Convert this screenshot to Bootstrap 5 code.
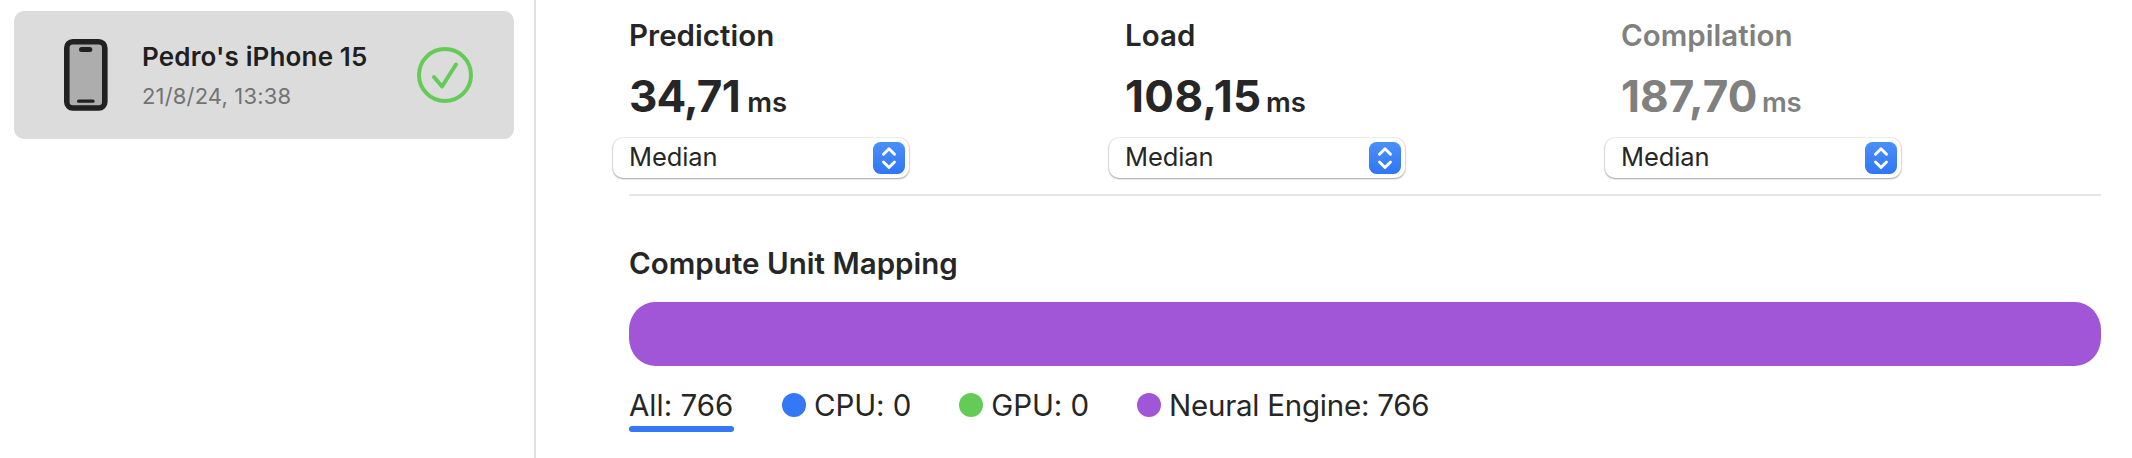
<!DOCTYPE html>
<html lang="en">
<head>
<meta charset="utf-8">
<title>Performance Report</title>
<link rel="stylesheet" href="https://cdn.jsdelivr.net/npm/bootstrap@5.3.0/dist/css/bootstrap.min.css">
<style>
body{font-family:Inter,"Liberation Sans",sans-serif;color:#262626;background:#fff;height:458px;overflow:hidden;white-space:nowrap}
.sidebar{width:536px;border-right:2px solid #e2e2e2;padding:11px 20px 0 14px}
.device{height:128px;border-radius:10px;background:#dcdcdc;padding:0 41px 0 50px}
.device-info{margin-left:34px}
.device-name{font-size:26px;line-height:32px;font-weight:600;letter-spacing:.15px;color:#1f1f1f}
.device-date{font-size:22px;line-height:28px;color:#737373;margin-top:9px;letter-spacing:.16px}
.report{padding:17px 31px 0 93px}
.metrics{display:grid;grid-template-columns:496px 496px 1fr}
.title{font-size:29.5px;line-height:36px;font-weight:600;letter-spacing:.03px}
.value{font-size:44px;line-height:48px;height:48px;font-weight:700;margin-top:19px}
.unit{font-size:27.5px;line-height:1;font-weight:600;letter-spacing:-.2px;margin-left:4.500px}
.prediction{letter-spacing:-.8px;margin-right:3px}
.load{letter-spacing:.4px}
.compilation{letter-spacing:.1px}
.dim{color:#808080}
.picker{width:296px;height:40px;margin:18px 0 0 -16px;border-radius:10px;padding:0 4px 0 16px;background:#fff;box-shadow:0 0 0 1px rgba(0,0,0,.07),0 1px 2px rgba(0,0,0,.32)}
.picker-label{font-size:25.5px;line-height:37px;height:40px;letter-spacing:-.08px}
.divider{height:2px;background:#e5e5e5;margin:16px 0 49px}
.bar{height:64px;border-radius:26px / 28px;background:#a056d6;margin-top:21px}
.legend{font-size:29.5px;line-height:36px;margin-top:21px;letter-spacing:-.08px;gap:48px}
.selected::after{content:"";display:block;height:6px;border-radius:3px;background:#3478f6;margin-top:3px;width:105px}
.selected{width:105px;letter-spacing:0}
.neural{letter-spacing:-.24px}
.dot{width:24px;height:24px;border-radius:50%;margin-top:6px;margin-right:8px}
.dot-cpu{background:#3478f6}
.dot-gpu{background:#64cb56}
.dot-neural{background:#a056d6}
</style>
</head>
<body class="d-flex">
<aside class="sidebar flex-shrink-0">
  <div class="device d-flex align-items-center">
    <svg width="44" height="72" viewBox="0 0 44 72"><rect x="2.8" y="2.8" width="38" height="66.2" rx="6" fill="#adadad" stroke="#212121" stroke-width="5.6"/><rect x="15" y="8" width="13.3" height="5" rx="2.5" fill="#212121"/><rect x="13" y="60.6" width="17.6" height="3.2" rx="1.6" fill="#212121"/></svg>
    <div class="device-info">
      <div class="device-name">Pedro's iPhone 15</div>
      <div class="device-date">21/8/24, 13:38</div>
    </div>
    <svg class="ms-auto" width="56" height="56" viewBox="0 0 56 56" fill="none" stroke="#64cb56" stroke-width="4"><circle cx="28" cy="28" r="26"/><path d="M17 30L25 39.500L39 17.500" stroke-linecap="round" stroke-linejoin="round"/></svg>
  </div>
</aside>
<main class="report flex-grow-1">
  <section class="metrics">
    <div>
      <div class="title">Prediction</div>
      <div class="value"><span class="prediction">34,71</span><span class="unit">ms</span></div>
      <div class="picker d-flex align-items-center justify-content-between"><span class="picker-label">Median</span><svg width="32" height="32" viewBox="0 0 32 32"><use href="#stepper"/></svg></div>
    </div>
    <div>
      <div class="title">Load</div>
      <div class="value"><span class="load">108,15</span><span class="unit">ms</span></div>
      <div class="picker d-flex align-items-center justify-content-between"><span class="picker-label">Median</span><svg width="32" height="32" viewBox="0 0 32 32"><use href="#stepper"/></svg></div>
    </div>
    <div>
      <div class="title dim">Compilation</div>
      <div class="value dim"><span class="compilation">187,70</span><span class="unit">ms</span></div>
      <div class="picker d-flex align-items-center justify-content-between"><span class="picker-label">Median</span><svg width="32" height="32" viewBox="0 0 32 32"><use href="#stepper"/></svg></div>
    </div>
  </section>
  <div class="divider"></div>
  <div class="title">Compute Unit Mapping</div>
  <div class="bar"></div>
  <div class="legend d-flex">
    <div class="selected">All: 766</div>
    <div class="d-flex"><i class="dot dot-cpu"></i>CPU: 0</div>
    <div class="d-flex"><i class="dot dot-gpu"></i>GPU: 0</div>
    <div class="d-flex neural"><i class="dot dot-neural"></i>Neural Engine: 766</div>
  </div>
</main>
<svg width="0" height="0" class="position-absolute"><defs><linearGradient id="blue" x2="0" y2="1"><stop stop-color="#4a90f8"/><stop offset="1" stop-color="#3076f6"/></linearGradient><g id="stepper"><rect width="32" height="32" rx="7.500" fill="url(#blue)"/><path d="M10.500 12.300L16 6.800L21.500 12.300M10.500 20L16 25.500L21.500 20" fill="none" stroke="#fff" stroke-width="2.900" stroke-linecap="round" stroke-linejoin="round"/></g></defs></svg>
<script src="https://cdn.jsdelivr.net/npm/bootstrap@5.3.0/dist/js/bootstrap.bundle.min.js"></script>
</body>
</html>
